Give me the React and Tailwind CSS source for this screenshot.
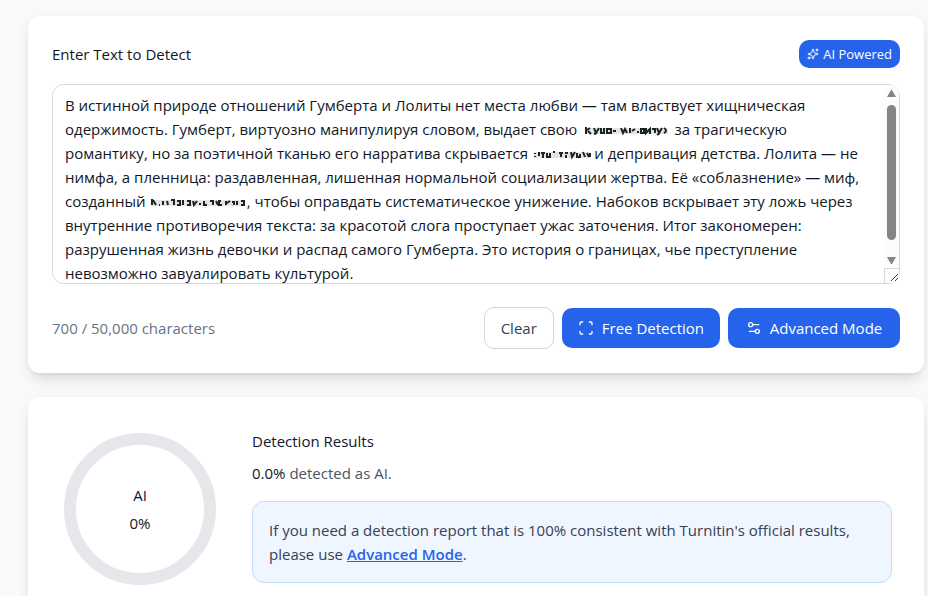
import React from "react";
import { Sparkles, Scan, Settings2 } from "lucide-react";

const NB = "\u00a0";

const essay = [
  "В истинной природе отношений Гумберта и Лолиты нет места любви — там властвует хищническая",
  "одержимость. Гумберт, виртуозно манипулируя словом, выдает свою " + NB.repeat(23) + " за трагическую",
  "романтику, но за поэтичной тканью его нарратива скрывается " + NB.repeat(15) + " и депривация детства. Лолита — не",
  "нимфа, а пленница: раздавленная, лишенная нормальной социализации жертва. Её «соблазнение» — миф,",
  "созданный " + NB.repeat(25) + ", чтобы оправдать систематическое унижение. Набоков вскрывает эту ложь через",
  "внутренние противоречия текста: за красотой слога проступает ужас заточения. Итог закономерен:",
  "разрушенная жизнь девочки и распад самого Гумберта. Это история о границах, чье преступление",
  "невозможно завуалировать культурой.",
].join("\n");

// Smudge that hides a censored phrase inside the text.
function Smudge({ className, width, marks }) {
  return (
    <svg
      aria-hidden="true"
      className={"pointer-events-none absolute " + className}
      width={width}
      height="10"
      viewBox={`0 0 ${width} 10`}
      fill="none"
      stroke="#1c2421"
      strokeWidth="2"
    >
      <path d={`M1 5H${width - 2}`} strokeWidth="6" opacity="0.12" />
      <path d={marks} />
    </svg>
  );
}

function TextField() {
  return (
    <div className="relative mt-4">
      <textarea
        id="source"
        aria-label="Enter Text to Detect"
        defaultValue={essay}
        className="block h-[200px] w-full resize-none overflow-y-auto rounded-xl border border-gray-300 bg-white px-3 py-2 pr-5 text-[15px] leading-6 whitespace-pre text-gray-900 [scrollbar-width:none]"
      />
      <Smudge
        className="top-[42px] left-[532px]"
        width={86}
        marks="M2 1v7M3 4l3-2M4 5l3 3M10 2l2 5 3-5M13 7l-3 1M17 2v5h3V2M23 3h4v4h-4zM29 5h3M37 2l2 5 2-4 2 4M46 2v5M48 5l3-2M53 6h2M57 3h3v4h-3zM62 2v5l4-4v5M68 3h3v4M73 2l2 5 3-5M76 7l-3 2M80 2q4 3 0 5"
      />
      <Smudge
        className="top-[66px] left-[481px]"
        width={59}
        marks="M2 3v1M2 6v1M6 2v4M8 3h4M10 4v4M14 3v4h3V3M20 2h2M26 3h4M28 3v4M32 3h3M33 5v3M38 2l1 5 3-5M44 3v4h3V4M50 2l2 5M54 3l2 4M57 3v4"
      />
      <Smudge
        className="top-[114px] left-[98px]"
        width={96}
        marks="M2 1v6M3 2l3 5M9 7h1M13 3v4M17 3l1 4M21 2h3v5M27 3h3v4h-3M33 2v5M37 3h3v4h-3M43 3l1 4 3-4M49 6h2M54 3v4h3M60 3h3v4M66 3l2 4M71 3h-2v4h3M76 3v4M77 5l3-2M82 4h2v3M87 3v4M91 3h3v4h-3"
      />
      <svg
        aria-hidden="true"
        className="pointer-events-none absolute top-px right-px"
        width="15"
        height="198"
        viewBox="0 0 15 198"
      >
        <path d="M0 0h6a9 9 0 0 1 9 9v180a9 9 0 0 1-9 9H0z" fill="#fcfcfc" />
        <path d="M3 12 7 5h1l4 7z" fill="#858585" />
        <rect x="3" y="20" width="9" height="135" rx="4.5" fill="#858585" />
        <path d="M3 172h9l-4 7H7z" fill="#858585" />
        <path d="M.5 198v-14.5H15" fill="none" stroke="#d9d9d9" />
        <path d="m7 196 7-7m-3 7 3-3" fill="none" stroke="#444" />
      </svg>
    </div>
  );
}

function Card({ className, children }) {
  return (
    <section
      className={
        "rounded-xl bg-white shadow-[0_10px_15px_-3px_rgba(0,0,0,0.1),0_4px_6px_-4px_rgba(0,0,0,0.1),0_0_16px_rgba(0,0,0,0.04)] " +
        className
      }
    >
      {children}
    </section>
  );
}

export default function App() {
  return (
    <main className="flex min-h-screen flex-col gap-6 bg-gray-50 pt-4 pr-1 pl-7 font-['Open_Sans','Noto_Sans',sans-serif] text-[15px] leading-6 text-gray-900">
      <Card className="p-6">
        <div className="flex items-center justify-between">
          <label htmlFor="source">Enter Text to Detect</label>
          <span className="flex h-7 items-center gap-1 rounded-[10px] bg-[#2563eb] px-2 text-[13px] text-white">
            <Sparkles size={12} />
            AI Powered
          </span>
        </div>
        <TextField />
        <div className="mt-[23px] flex items-center justify-between">
          <p className="text-gray-500">700 / 50,000 characters</p>
          <div className="flex items-center gap-2">
            <button type="button" className="h-[42px] rounded-[10px] border border-gray-300 bg-white px-4 text-gray-700">
              Clear
            </button>
            <button type="button" className="flex h-10 items-center gap-2 rounded-[10px] bg-[#2563eb] px-4 text-white">
              <Scan size={16} />
              Free Detection
            </button>
            <button
              type="button"
              className="flex h-10 min-w-[172px] items-center justify-center gap-2 rounded-[10px] bg-[#2563eb] px-4 text-white"
            >
              <Settings2 size={16} />
              Advanced Mode
            </button>
          </div>
        </div>
      </Card>

      <Card className="flex items-start gap-9 py-8 pr-8 pl-9">
        <div className="mt-1 flex size-[152px] shrink-0 flex-col items-center justify-center gap-1 rounded-full border-12 border-gray-200">
          <span>AI</span>
          <span>0%</span>
        </div>
        <div className="min-w-0 flex-1">
          <h2>Detection Results</h2>
          <p className="mt-2 text-gray-600">
            <span className="text-gray-900">0.0%</span> detected as AI.
          </p>
          <div className="mt-4 rounded-xl border border-blue-200 bg-blue-50 p-4 text-gray-700">
            If you need a detection report that is 100% consistent with Turnitin's official results, please use{" "}
            <a href="#advanced" className="font-semibold text-[#2563eb] underline">
              Advanced Mode
            </a>
            .
          </div>
        </div>
      </Card>
    </main>
  );
}
